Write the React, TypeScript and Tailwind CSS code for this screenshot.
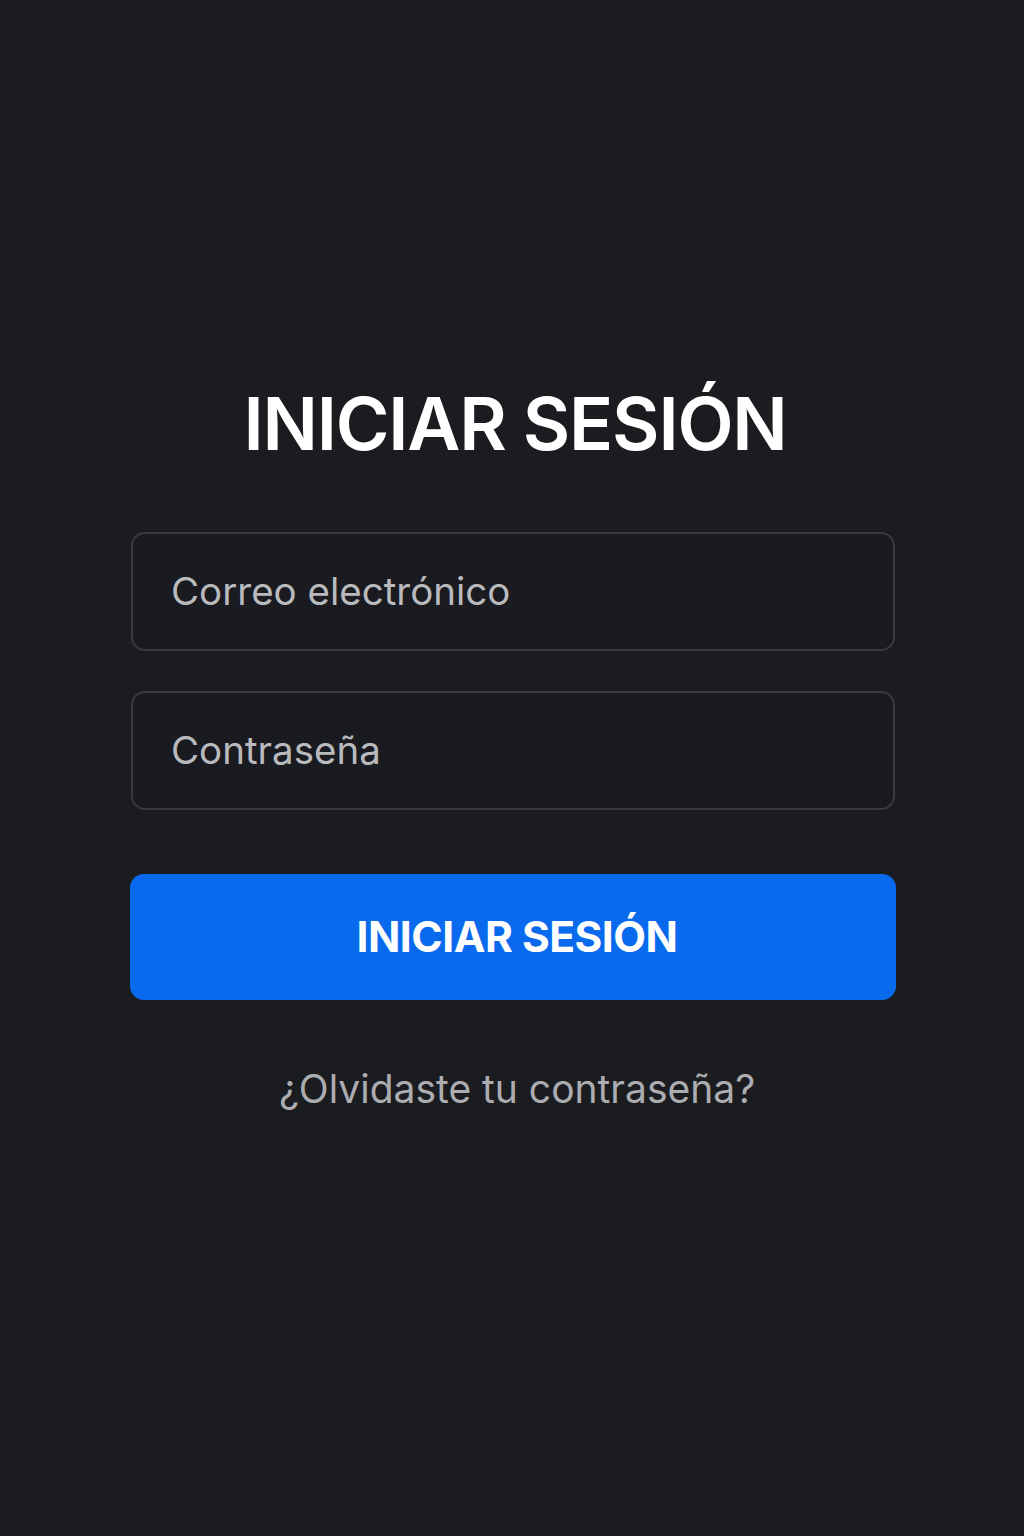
export default function App() {
  return (
    <div
      className="min-h-[1536px] w-full bg-[#1b1c20] flex flex-col items-center"
      style={{ fontFamily: 'Inter, "Noto Sans", sans-serif' }}
    >
      <div className="w-[766px] ml-[2px] flex flex-col items-stretch pt-[376px]">
        <h1 className="text-center text-white font-semibold text-[73px] leading-[96px] tracking-[-1.2px] pl-[4px]">
          INICIAR SESIÓN
        </h1>
        <div className="mt-[60px] flex flex-col gap-[40px]">
          <div className="h-[119px] mx-[1px] rounded-[14px] border-2 border-[#393a3f] bg-[#1a1b20] flex items-center px-[38px]">
            <span className="text-[38.5px] text-[#b9babe]">Correo electrónico</span>
          </div>
          <div className="h-[119px] mx-[1px] rounded-[14px] border-2 border-[#393a3f] bg-[#1a1b20] flex items-center px-[38px]">
            <span className="text-[38.5px] text-[#b9babe]">Contraseña</span>
          </div>
        </div>
        <button className="mt-[64px] h-[126px] rounded-[14px] bg-[#0a6aed] flex items-center justify-center pl-[8px]">
          <span className="text-white font-bold text-[42.5px] tracking-[-0.5px]">INICIAR SESIÓN</span>
        </button>
        <div className="mt-[60px] text-center text-[39px] text-[#acadb1] pl-[8px]">¿Olvidaste tu contraseña?</div>
      </div>
    </div>
  );
}
